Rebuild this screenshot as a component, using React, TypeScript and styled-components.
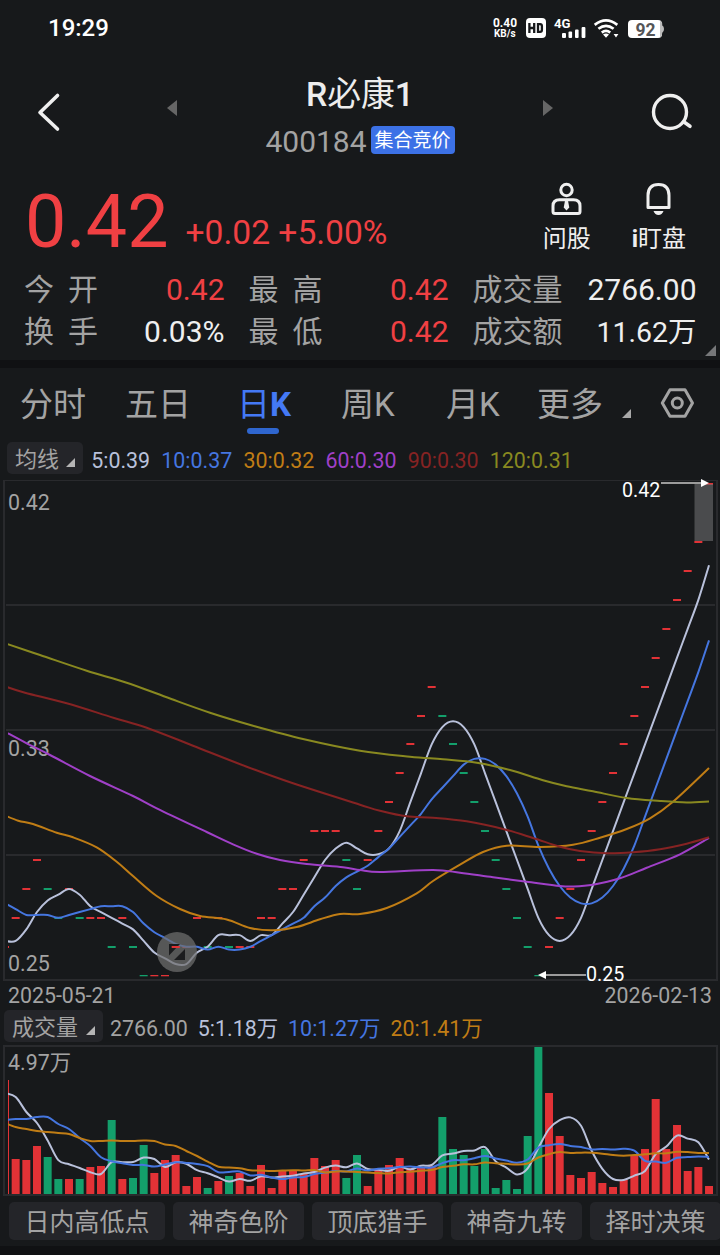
import React from "react";
import styled, { createGlobalStyle } from "styled-components";

const C = {
  bg: "#17191b",
  band: "#101113",
  chip: "#242529",
  grid: "#292a2d",
  red: "#f04043",
  barRed: "#e23236",
  green: "#139f6b",
  gray: "#a3a3a3",
  light: "#efefef",
  blue: "#4479f5",
  ma5: "#b9c1db",
  ma10: "#4576e0",
  ma30: "#c07d15",
  ma60: "#a040c8",
  ma90: "#862323",
  ma120: "#898920",
};

const Global = createGlobalStyle`
  html, body { margin: 0; background: ${C.bg}; }
  *, *::before, *::after { box-sizing: border-box; }
`;

const Screen = styled.main`
  width: 720px;
  height: 1255px;
  overflow: hidden;
  display: flex;
  flex-direction: column;
  background: ${C.bg};
  color: ${C.light};
  font-family: Roboto, "Noto Sans CJK SC", sans-serif;
  white-space: nowrap;
`;

const StatusBar = styled.div`
  height: 56px;
  flex: none;
  display: flex;
  align-items: center;
  justify-content: space-between;
  padding: 0 56px 0 48px;
`;

const Clock = styled.span`
  font-size: 24px;
  font-weight: 500;
  line-height: 56px;
  color: #fff;
`;

const StatusIcons = styled.svg`
  display: block;
  width: 175px;
  height: 56px;
`;

const TitleBar = styled.header`
  height: 114px;
  flex: none;
  display: grid;
  grid-template-columns: 165px 14px 1fr 14px 165px;
`;

const NavIcon = styled.svg<{ $top: number }>`
  display: block;
  margin-top: ${(p) => p.$top}px;
`;

const TitleCol = styled.div`
  display: flex;
  flex-direction: column;
  align-items: center;
`;

const Title = styled.h1`
  margin: 18px 0 0;
  font-size: 33.8px;
  line-height: 42px;
  font-weight: 500;
  color: #ededed;
`;

const Light = styled.span`
  font-weight: 400;
`;

const CodeRow = styled.div`
  display: flex;
  align-items: center;
  gap: 4px;
  height: 30px;
  margin-top: 10px;
  font-size: 30px;
  color: ${C.gray};
`;

const Tag = styled.span`
  width: 84px;
  height: 28px;
  margin-top: -2px;
  border-radius: 4px;
  background: #3c71e6;
  color: #fff;
  font-size: 19px;
  line-height: 29px;
  text-align: center;
`;

const Quote = styled.section`
  height: 100px;
  flex: none;
  display: flex;
  justify-content: space-between;
  padding: 0 34px 0 25px;
`;

const PriceGroup = styled.div`
  display: flex;
  align-items: baseline;
  height: 100px;
  color: ${C.red};
`;

const Price = styled.span`
  font-size: 73.6px;
  line-height: 104px;
`;

const Change = styled.span`
  margin: 0 0 4px 17px;
  font-size: 33.6px;
  line-height: 40px;
  transform: translateY(-3px);
`;

const Actions = styled.div`
  display: flex;
  gap: 41px;
  padding-top: 12px;
`;

const Action = styled.div`
  display: flex;
  flex-direction: column;
  align-items: center;
  font-size: 24px;
  line-height: 30px;

  svg { margin-bottom: 8px; }
`;

const Stats = styled.section`
  position: relative;
  height: 90px;
  flex: none;
  display: grid;
  grid-template-columns: 200.5px 200px 224px;
  column-gap: 24px;
  grid-auto-rows: 42px;
  padding: 0 0 0 24px;
`;

const Stat = styled.div`
  display: flex;
  justify-content: space-between;
  align-items: baseline;
  line-height: 40px;
`;

const StatLabel = styled.span<{ $spread?: boolean }>`
  display: flex;
  justify-content: space-between;
  width: ${(p) => (p.$spread ? "74px" : "auto")};
  font-size: 30px;
  color: ${C.gray};
`;

const StatValue = styled.span<{ $up?: boolean; $size: number }>`
  font-size: ${(p) => p.$size}px;
  color: ${(p) => (p.$up ? C.red : C.light)};
`;

const Corner = styled.svg`
  position: absolute;
  right: 4px;
  bottom: 4px;
`;

const Band = styled.div<{ $h: number }>`
  height: ${(p) => p.$h}px;
  flex: none;
  background: ${C.band};
`;

const Tabs = styled.nav`
  height: 72px;
  flex: none;
  display: flex;
  padding-left: 20px;
`;

const Tab = styled.div<{ $w: number; $active?: boolean }>`
  width: ${(p) => p.$w}px;
  font-size: 33px;
  line-height: 74px;
  color: ${(p) => (p.$active ? C.blue : C.gray)};

  b { font-weight: 700; }
`;

const ActiveTab = styled.span`
  display: inline-flex;
  flex-direction: column;
  align-items: center;
  height: 72px;

  &::after {
    content: "";
    width: 32px;
    height: 6px;
    flex: none;
    margin-top: -14px;
    margin-right: 2px;
    border-radius: 3px;
    background: #2f66cf;
  }
`;

const TabIcons = styled.svg`
  display: block;
`;

const LegendRow = styled.div<{ $top: number; $pad: number; $h: number; $gap: number }>`
  height: ${(p) => p.$h}px;
  flex: none;
  display: flex;
  align-items: flex-start;
  gap: ${(p) => p.$gap}px;
  padding: ${(p) => p.$top}px 0 0 ${(p) => p.$pad}px;
  font-size: 21.4px;
  line-height: 38px;
`;

const Picker = styled.span<{ $w: number }>`
  display: flex;
  align-items: center;
  justify-content: space-between;
  width: ${(p) => p.$w}px;
  height: 32px;
  margin-right: -3px;
  padding: 4px 8px 0 8px;
  border-radius: 5px;
  background: ${C.chip};
  color: ${C.gray};
  font-size: 22px;
  line-height: 32px;

  svg { margin-top: 5px; }
`;

const Legend = styled.span<{ $c: string }>`
  color: ${(p) => p.$c};
`;

const Chart = styled.svg`
  display: block;
  flex: none;
  overflow: visible;
`;

const Dates = styled.div`
  height: 29px;
  flex: none;
  display: flex;
  justify-content: space-between;
  padding: 0 8px;
  font-size: 21.3px;
  line-height: 30px;
  color: ${C.gray};
`;

const Strategies = styled.div`
  height: 50px;
  flex: none;
  display: flex;
  gap: 8px;
  padding: 6px 0 0 9px;
  overflow: hidden;
`;

const Strategy = styled.span<{ $w: number }>`
  flex: none;
  width: ${(p) => p.$w}px;
  height: 38px;
  border-radius: 5px;
  background: ${C.chip};
  color: ${C.gray};
  font-size: 25px;
  line-height: 42px;
  text-align: center;
`;

/* ---------- data ---------- */

type Pt = [number, number];

const slotX = (i: number) => 5 + 10.667 * i;

// closing price in cents above 0.25, one entry per trading day
const closes = [
  1, 2, 3, 4, 3, 2, 3, 2, 2, 2, 1, 2, 1, 0, 0, 0, 1, 1, 2, 1, 2, 1, 1, 1, 2, 2, 3, 3, 4, 5, 5, 5, 4,
  3, 4, 5, 6, 7, 8, 9, 10, 9, 8, 7, 6, 5, 4, 3, 2, 1, 0, 1, 2, 3, 4, 5, 6, 7, 8, 9, 10, 11, 12, 13,
  14, 15, 17,
];

const volumes = [
  114, 35, 34, 48, 37, 15, 15, 15, 27, 28, 74, 15, 16, 49, 21, 34, 39, 8, 17, 6, 13, 18, 21, 8, 29, 6,
  24, 24, 20, 36, 28, 34, 16, 39, 8, 24, 29, 36, 26, 26, 28, 77, 45, 39, 28, 45, 6, 14, 5, 58, 147,
  101, 58, 19, 16, 22, 11, 7, 14, 38, 45, 95, 45, 69, 23, 27, 8,
];

const falling = new Set([
  4, 5, 7, 10, 12, 13, 19, 21, 32, 33, 41, 42, 43, 44, 45, 46, 47, 48, 49, 50,
]);

const average = (data: number[], n: number, head: number[]) =>
  data.map((_, i) =>
    i < head.length
      ? head[i]
      : data.slice(Math.max(0, i - n + 1), i + 1).reduce((a, b) => a + b, 0) / n
  );

const priceY = (k: number) => 975.6 - 28.9 * k;
const volumeY = (v: number) => 1194 - v;

const toPoints = (vals: number[], y: (v: number) => number): Pt[] =>
  vals.map((v, i) => [slotX(i), y(v)]);

// smooth curve through the points
const curve = (p: Pt[]) => {
  let d = `M${p[0][0]} ${p[0][1]}`;
  for (let i = 0; i < p.length - 1; i++) {
    const a = p[i - 1] || p[i];
    const b = p[i];
    const c = p[i + 1];
    const e = p[i + 2] || c;
    const k = 6;
    d += `C${b[0] + (c[0] - a[0]) / k} ${b[1] + (c[1] - a[1]) / k} ${c[0] - (e[0] - b[0]) / k} ${
      c[1] - (e[1] - b[1]) / k
    } ${c[0]} ${c[1]}`;
  }
  return d;
};

const price5 = toPoints(average(closes, 5, [1.2, 1.2, 1.6, 2.2]), priceY);
const price10 = toPoints(average(closes, 10, [2.5, 2.3, 2.1, 2.1, 2.1, 2, 2.1, 2.2, 2.3]), priceY);
const price30: Pt[] = [[5, 815.5], [18.3, 820.7], [33, 824], [56.7, 832.7], [73, 837.3], [96.7, 847.3], [116.7, 861.7], [133, 876], [156.7, 896], [180, 909], [200, 916], [226.7, 919.5], [250, 928], [273, 930.3], [296.7, 927], [320, 919.3], [340, 914], [360, 914], [386.7, 908], [416.7, 893.3], [433, 881], [460, 864.7], [483, 852], [506.7, 845.7], [540, 847], [573, 844.7], [600, 837.7], [626.7, 829], [650, 818.3], [673, 801.7], [709, 768]];
const price60: Pt[] = [[5, 731.7], [26.7, 743.3], [50, 755], [90, 776], [133, 796], [156.7, 808.3], [206.7, 832], [233, 844.3], [256.7, 853.7], [280, 860], [306.7, 864], [343, 867.3], [360, 870], [380, 872], [433, 870], [460, 872.7], [493, 877.3], [526.7, 881.7], [560, 886], [573, 886.5], [593, 884.7], [620, 878.3], [646.7, 867.7], [680, 854.3], [709, 838]];
const price90: Pt[] = [[5, 686.3], [25, 692.7], [66.7, 703.3], [113.3, 717.7], [146.7, 727.7], [193, 745.7], [246.7, 766.7], [293, 783.3], [360, 804.7], [380, 810.7], [406.7, 816.3], [433, 817.7], [466.7, 821.3], [503, 829], [533, 838], [560, 846.7], [580, 851], [606.7, 853.3], [633, 852.3], [660, 849.3], [686.7, 843.7], [709, 837.3]];
const price120: Pt[] = [[5, 643.3], [40, 655], [86.7, 670.7], [126.7, 682.7], [166.7, 697.3], [210, 712.7], [253, 725.7], [303, 739], [360, 750.7], [410, 756.7], [443, 759.3], [476.7, 762.7], [510, 770], [543, 780.3], [566.7, 786.3], [593, 791.3], [626.7, 798], [660, 801], [686.7, 802.5], [709, 801.5]];

const vol5 = toPoints(average(volumes, 5, [101, 97, 82, 71]), volumeY);
const vol10 = toPoints(average(volumes, 10, [74, 75, 75, 77, 77, 70, 65, 56, 48]), volumeY);
const vol20 = toPoints(
  average(volumes, 20, [71, 67, 65, 63, 62, 61, 60, 56, 53, 53, 53.5, 53, 53, 53.5, 53, 49.5, 48, 43, 38]),
  volumeY
);

/* ---------- pieces ---------- */

const Wedge = () => (
  <svg width="9" height="9" viewBox="0 0 10 10">
    <path d="M10 0V10H0Z" fill="#b5b5b5" />
  </svg>
);

const Tick = ({ i }: { i: number }) => (
  <rect
    x={slotX(i) - 4}
    y={Math.round(priceY(closes[i])) - 1}
    width="8"
    height={closes[i] === 0 ? 1.3 : 2}
    fill={falling.has(i) ? C.green : C.barRed}
  />
);

const PriceChart = () => (
  <Chart width="720" height="501" viewBox="0 480 720 501">
    <defs>
      <clipPath id="plot">
        <rect x="8" y="481" width="705" height="498" />
      </clipPath>
    </defs>
    <g stroke={C.grid} fill="none">
      <path d="M4 480.5H718" />
      <path d="M4 480V980M717 480V980M3 980H718M6 605H715M6 730H715M6 855H715" strokeWidth="2" />
    </g>
    <g fontFamily="Roboto" fontSize="21.4" fill={C.gray}>
      <text x="8" y="510">0.42</text>
      <text x="8" y="756">0.33</text>
      <text x="8" y="971">0.25</text>
    </g>
    <g clipPath="url(#plot)">
      {closes.map((_, i) => (
        <Tick key={i} i={i} />
      ))}
      <g fill="none" strokeWidth="2">
        <path d={curve(price5)} stroke={C.ma5} />
        <path d={curve(price10)} stroke={C.ma10} />
        <path d={curve(price30)} stroke={C.ma30} />
        <path d={curve(price60)} stroke={C.ma60} />
        <path d={curve(price90)} stroke={C.ma90} />
        <path d={curve(price120)} stroke={C.ma120} />
      </g>
    </g>
    <circle cx="177" cy="952" r="20" fill="#6f6f6f" fillOpacity="0.72" />
    <path d="M169 944H180L169 955.5ZM185 949V960H174Z" fill="#1b1c1e" />
    <Tick i={16} />
    <rect x="694.5" y="484" width="18.5" height="57" fill="#6b6b6c" fillOpacity="0.62" />
    <path d="M661 483H702M545 975H586" stroke="#9c9c9c" strokeWidth="2" />
    <path d="M701 479L709 483L701 487ZM546 971L538 975L546 979Z" fill="#fff" />
    <g fontFamily="Roboto" fontSize="19.7" fill="#fff">
      <text x="622" y="497">0.42</text>
      <text x="586" y="981">0.25</text>
    </g>
  </Chart>
);

const VolumeChart = () => (
  <Chart width="720" height="152" viewBox="0 1044 720 152">
    <defs>
      <clipPath id="volume">
        <rect x="8" y="1046" width="705" height="148" />
      </clipPath>
    </defs>
    <rect x="4" y="1046" width="713" height="149" fill="none" stroke={C.grid} strokeWidth="2" />
    <text x="8" y="1070" fontFamily='Roboto, "Noto Sans CJK SC"' fontSize="21.4" fill={C.gray}>
      4.97万
    </text>
    <g clipPath="url(#volume)">
      {volumes.map((v, i) => (
        <rect
          key={i}
          x={slotX(i) - 4}
          y={volumeY(v)}
          width="8"
          height={v}
          fill={falling.has(i) ? C.green : C.barRed}
        />
      ))}
      <g fill="none" strokeWidth="2">
        <path d={curve(vol5)} stroke={C.ma5} />
        <path d={curve(vol10)} stroke={C.ma10} />
        <path d={curve(vol20)} stroke={C.ma30} />
      </g>
    </g>
  </Chart>
);

type StatProps = { label: string; value: string; up?: boolean; spread?: boolean; size?: number };

const StatItem = ({ label, value, up, spread, size = 30 }: StatProps) => (
  <Stat>
    <StatLabel $spread={spread}>
      {spread ? label.split("").map((c) => <span key={c}>{c}</span>) : label}
    </StatLabel>
    <StatValue $up={up} $size={size}>{value}</StatValue>
  </Stat>
);

export default function App() {
  return (
    <Screen>
      <Global />
      <StatusBar>
        <Clock>19:29</Clock>
        <StatusIcons viewBox="489 0 175 56">
          <g fontFamily="Roboto" fontWeight="700" fill="#fff">
            <text x="493" y="27" fontSize="12.5" textLength="24" lengthAdjust="spacingAndGlyphs">0.40</text>
            <text x="494" y="37" fontSize="10" textLength="21.5" lengthAdjust="spacingAndGlyphs">KB/s</text>
            <text x="554" y="28" fontSize="13.5" textLength="16.5" lengthAdjust="spacingAndGlyphs">4G</text>
          </g>
          <rect x="526" y="18" width="20" height="20" rx="4" fill="#fff" />
          <path d="M529.4 23V33M534.2 23V33M529.4 28H534.2M538 24.2H540.1Q541.9 24.2 541.9 26V30Q541.9 31.8 540.1 31.8H538Z" fill="none" stroke={C.bg} strokeWidth="2.3" />
          <g fill="#fff">
            <rect x="562" y="33" width="4" height="5" rx="1" />
            <rect x="568.5" y="31.5" width="3.6" height="6.5" rx="1" />
            <rect x="575" y="29.5" width="3.6" height="8.5" rx="1" />
            <rect x="581.6" y="27" width="3.8" height="11" rx="1" />
          </g>
          <g fill="none" stroke="#fff" strokeWidth="2.7">
            <path d="M594.7 24.9Q606 15.8 617.3 24.9" />
            <path d="M598.4 28.8Q606 22.8 613.6 28.8" />
            <path d="M601.8 32.6Q606 29.2 610.2 32.6" />
          </g>
          <path d="M603 34.6Q606 32.6 609 34.6L606 37.7ZM613.6 34H618.4L616 37.4Z" fill="#fff" />
          <rect x="628" y="20" width="34" height="18" rx="4" fill="#fff" />
          <path d="M660 20.5Q662.3 22 662.3 25.5Q664 26 664 29T662.3 32.8Q662.3 36 660 37.5Z" fill="#bcbcbc" />
          <text x="635.5" y="36" fontFamily="Roboto" fontWeight="700" fontSize="17.5" fill="#545557">92</text>
        </StatusIcons>
      </StatusBar>

      <TitleBar>
        <NavIcon $top={36} width="70" height="40" viewBox="0 92 70 40">
          <path d="M57.5 95.5L40 112.5L57.5 129" fill="none" stroke={C.light} strokeWidth="3.6" strokeLinecap="round" strokeLinejoin="round" />
        </NavIcon>
        <NavIcon $top={43} width="14" height="18" viewBox="165 99 14 18">
          <path d="M177 100V116L167 108Z" fill="#666" />
        </NavIcon>
        <TitleCol>
          <Title>R<Light>必康</Light>1</Title>
          <CodeRow>
            400184<Tag>集合竞价</Tag>
          </CodeRow>
        </TitleCol>
        <NavIcon $top={43} width="14" height="18" viewBox="541 99 14 18">
          <path d="M543 100V116L553 108Z" fill="#666" />
        </NavIcon>
        <NavIcon $top={34} width="165" height="46" viewBox="555 90 165 46">
          <circle cx="670" cy="112" r="16.5" fill="none" stroke={C.light} strokeWidth="3.4" />
          <path d="M684 122L690 126.3" stroke={C.light} strokeWidth="3.6" strokeLinecap="round" />
        </NavIcon>
      </TitleBar>

      <Quote>
        <PriceGroup>
          <Price>0.42</Price>
          <Change>+0.02 +5.00%</Change>
        </PriceGroup>
        <Actions>
          <Action>
            <svg width="32" height="34" viewBox="550.5 182 32 34" fill="none" stroke={C.light} strokeWidth="3">
              <circle cx="566" cy="190" r="5.7" />
              <path d="M559 199.8H573Q579.5 199.8 579.5 206V211.5Q579.5 213.5 577.5 213.5H554.5Q552.5 213.5 552.5 211.5V206Q552.5 199.8 559 199.8Z" />
              <path d="M564.5 200.5H567.5L568.8 207.5L566 210.5L563.2 207.5Z" fill={C.light} stroke="none" />
            </svg>
            问股
          </Action>
          <Action>
            <svg width="32" height="34" viewBox="642.5 182 32 34">
              <path d="M647.5 207.5V195.5Q647.5 184.5 658 184.5T668.5 195.5V207.5Z" fill="none" stroke={C.light} strokeWidth="3" strokeLinejoin="round" />
              <path d="M653 211H663Q661.5 215 658 215T653 211Z" fill={C.light} />
            </svg>
            <span><b>i</b>盯盘</span>
          </Action>
        </Actions>
      </Quote>

      <Stats>
        <StatItem label="今开" value="0.42" up spread />
        <StatItem label="最高" value="0.42" up spread />
        <StatItem label="成交量" value="2766.00" />
        <StatItem label="换手" value="0.03%" spread />
        <StatItem label="最低" value="0.42" up spread />
        <StatItem label="成交额" value="11.62万" size={28.5} />
        <Corner width="11" height="11" viewBox="0 0 10 10">
          <path d="M10 0V10H0Z" fill="#77787a" />
        </Corner>
      </Stats>
      <Band $h={8} />

      <Tabs>
        <Tab $w={105}>分时</Tab>
        <Tab $w={112}>五日</Tab>
        <Tab $w={104} $active>
          <ActiveTab>
            <span>日<b>K</b></span>
          </ActiveTab>
        </Tab>
        <Tab $w={105}>周K</Tab>
        <Tab $w={91}>月K</Tab>
        <Tab $w={81}>更多</Tab>
        <TabIcons width="80" height="72" viewBox="618 368 80 72">
          <path d="M631 409V418H622Z" fill="#a8a8a8" />
          <path d="M670 389.8H685L692.5 403L685 416.3H670L662.3 403Z" fill="none" stroke={C.gray} strokeWidth="3" strokeLinejoin="round" />
          <circle cx="677.3" cy="403" r="5" fill="none" stroke={C.gray} strokeWidth="3" />
        </TabIcons>
      </Tabs>

      <LegendRow $top={2} $pad={7} $h={40} $gap={11.2}>
        <Picker $w={76}>均线<Wedge /></Picker>
        <Legend $c={C.ma5}>5:0.39</Legend>
        <Legend $c={C.ma10}>10:0.37</Legend>
        <Legend $c={C.ma30}>30:0.32</Legend>
        <Legend $c={C.ma60}>60:0.30</Legend>
        <Legend $c={C.ma90}>90:0.30</Legend>
        <Legend $c={C.ma120}>120:0.31</Legend>
      </LegendRow>
      <PriceChart />
      <Dates>
        <span>2025-05-21</span>
        <span>2026-02-13</span>
      </Dates>
      <LegendRow $top={0} $pad={4} $h={34} $gap={10}>
        <Picker $w={99}>成交量<Wedge /></Picker>
        <Legend $c={C.gray}>2766.00</Legend>
        <Legend $c={C.ma5}>5:1.18万</Legend>
        <Legend $c={C.ma10}>10:1.27万</Legend>
        <Legend $c={C.ma30}>20:1.41万</Legend>
      </LegendRow>
      <VolumeChart />
      <Strategies>
        <Strategy $w={156}>日内高低点</Strategy>
        <Strategy $w={131}>神奇色阶</Strategy>
        <Strategy $w={131}>顶底猎手</Strategy>
        <Strategy $w={131}>神奇九转</Strategy>
        <Strategy $w={131}>择时决策</Strategy>
      </Strategies>
      <Band $h={9} />
    </Screen>
  );
}
